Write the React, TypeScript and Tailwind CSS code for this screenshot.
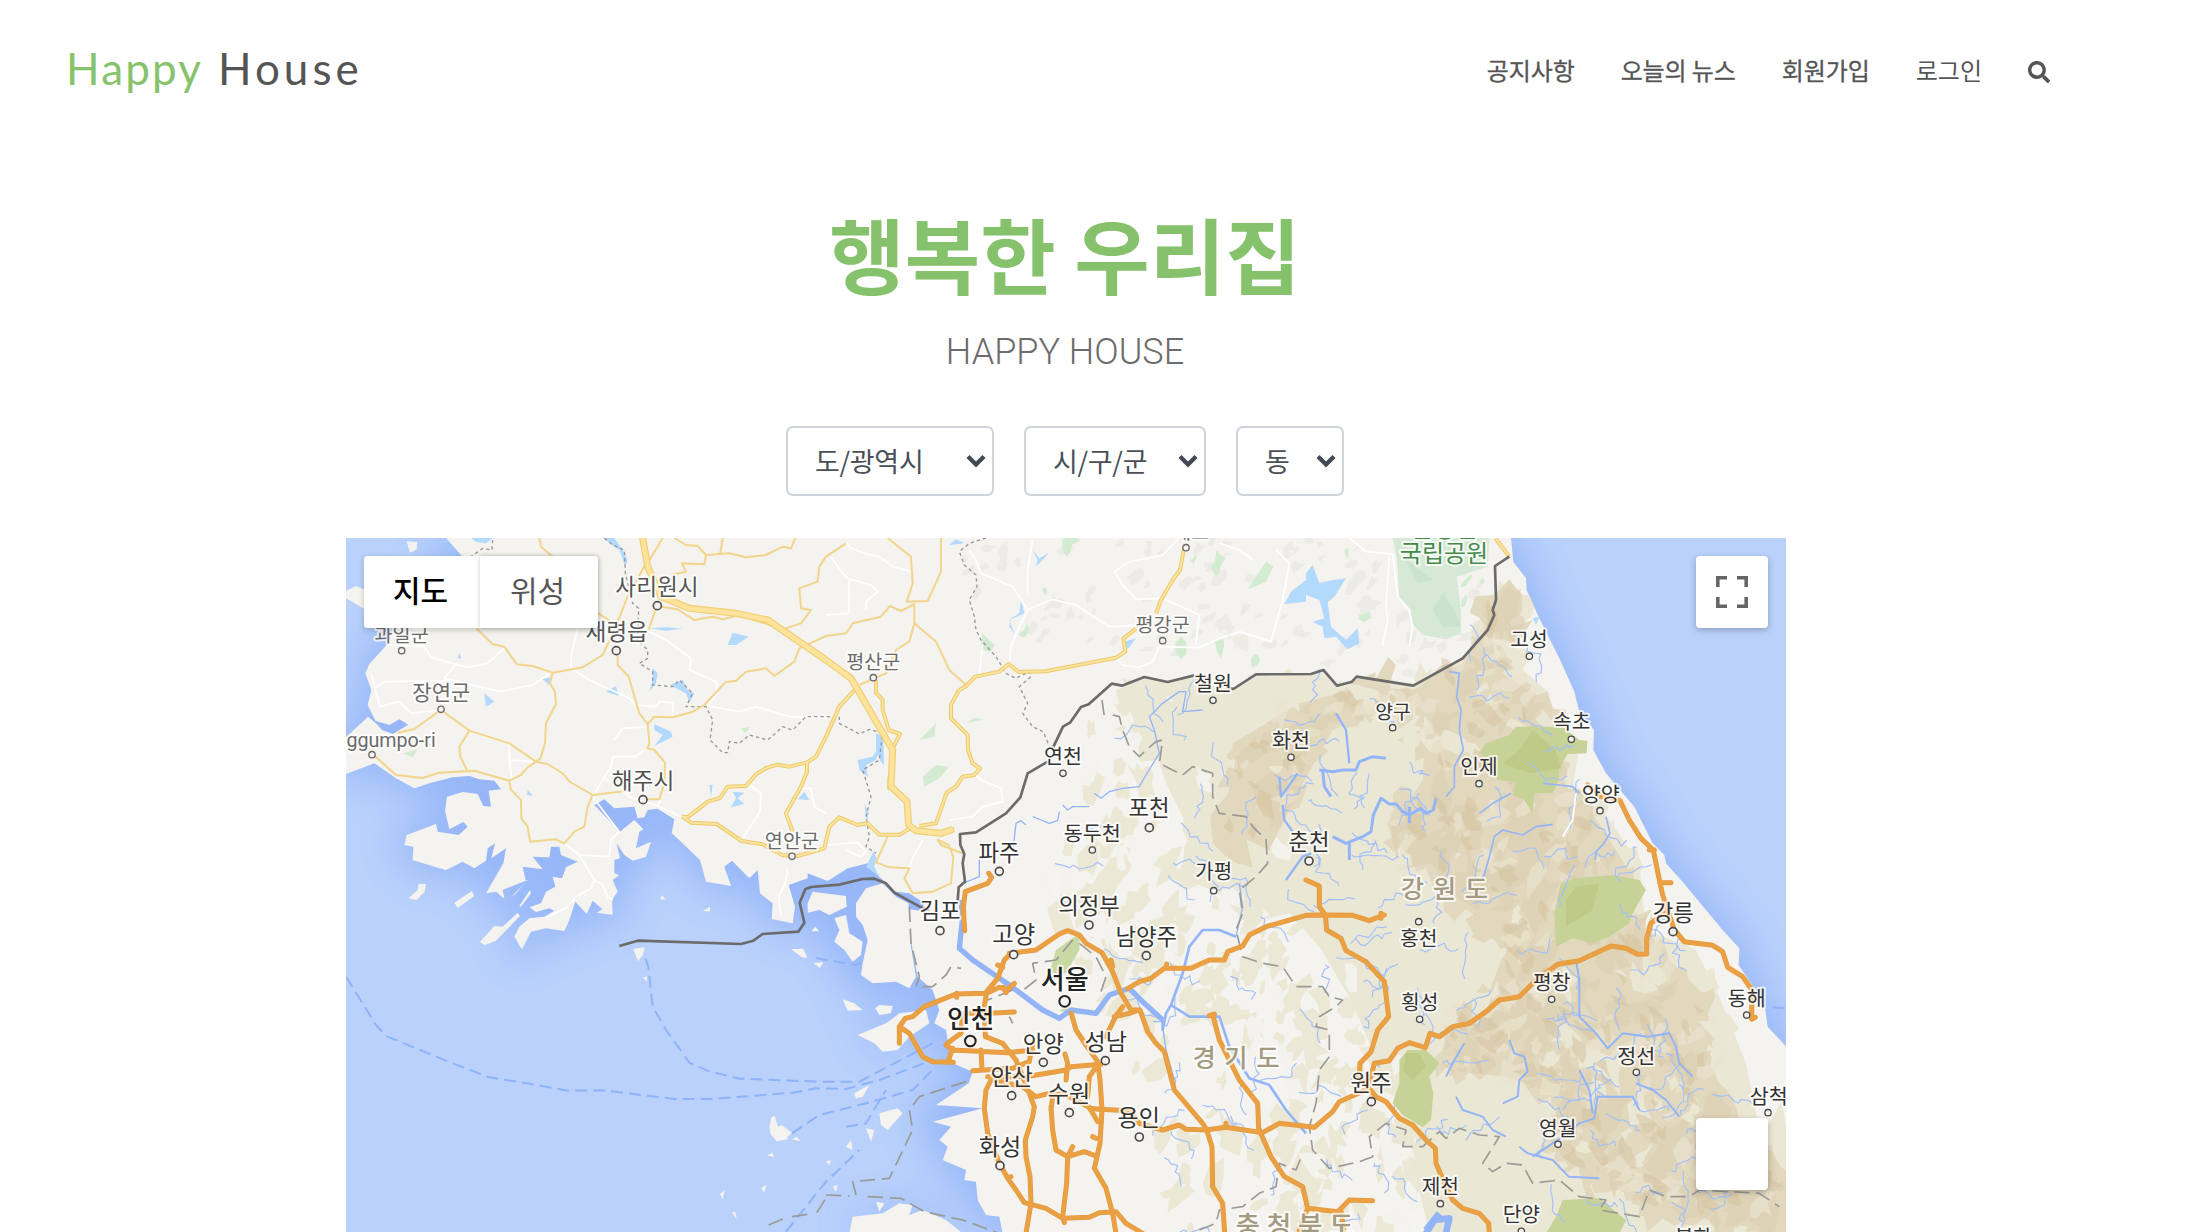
import { FaSearch } from "react-icons/fa";

type Pt = [number, number];

const KR = "font-['Noto_Sans_CJK_KR',sans-serif]";

const MAIN_LAND =
  "M300,24 L350,80 L240,160 L140,294 L122,345 L70,402 L58,430 L76,480 L65,525 L88,572 L130,585 L160,568 L187,584 L140,612 L108,600 L92,582 L66,560 L0,622 L0,732 L85,700 L150,745 L205,775 L250,760 L320,742 L370,738 L400,748 L445,752 L465,778 L428,782 L435,830 L412,828 L395,792 L350,786 L303,800 L297,842 L310,898 L352,876 L365,890 L338,915 L275,905 L270,882 L182,915 L175,945 L202,950 L200,990 L270,1012 L300,1020 L350,995 L385,1015 L420,992 L425,955 L447,940 L436,985 L480,955 L472,1000 L420,1090 L450,1085 L475,1106 L470,1080 L545,1050 L495,1102 L508,1092 L540,1055 L530,1010 L590,1018 L560,980 L610,982 L615,950 L640,950 L645,975 L695,995 L660,1012 L648,1045 L620,1040 L628,1070 L600,1085 L585,1120 L550,1132 L570,1146 L610,1135 L625,1142 L595,1160 L550,1165 L520,1190 L505,1220 L528,1258 L555,1205 L600,1195 L655,1203 L670,1170 L688,1115 L722,1152 L740,1112 L770,1138 L752,1148 L800,1154 L798,1110 L815,1085 L800,1050 L820,1036 L805,1030 L805,990 L822,985 L812,940 L835,975 L860,992 L900,980 L915,935 L870,955 L880,905 L892,898 L865,870 L822,905 L745,825 L775,808 L805,835 L865,830 L875,865 L895,862 L905,840 L935,836 L985,868 L977,910 L1005,935 L1062,990 L1080,1055 L1155,1068 L1135,1010 L1158,992 L1210,1045 L1235,1020 L1242,1090 L1280,1120 L1277,1167 L1340,1180 L1347,1130 L1328,1065 L1385,1045 L1385,1030 L1445,1053 L1505,1015 L1565,1000 L1600,1040 L1650,1085 L1690,1090 L1735,1120 L1722,1142 L1690,1138 L1688,1190 L1700,1260 L1715,1340 L1760,1380 L1780,1440 L1765,1480 L1800,1500 L1810,1560 L1820,1600 L1880,1625 L1868,1660 L1770,1725 L1910,1735 L1760,1775 L1815,1790 L1780,1830 L1805,1850 L1790,1890 L1860,1920 L1855,1950 L1890,1955 L1895,2010 L1920,2055 L1960,2060 L1970,2110 L4330,2110 L4330,1560 L4265,1490 L4258,1440 L4235,1390 L4178,1305 L4180,1255 L4130,1200 L4005,1050 L3960,1000 L3955,975 L3920,940 L3865,830 L3780,730 L3742,660 L3744,600 L3700,545 L3685,485 L3645,395 L3580,265 L3542,180 L3540,145 L3502,95 L3495,24 Z";

const ISLANDS = [
  "M0,182 L30,168 L60,180 L60,240 L0,205 Z M182,34 L214,36 L212,58 L192,68 Z",
  "M187,1105 L215,1080 L218,1062 L240,1062 L236,1085 L212,1110 Z M325,1118 L378,1083 L384,1098 L335,1134 Z M402,1236 L445,1188 L470,1190 L515,1148 L522,1158 L450,1232 L415,1246 Z M520,1128 L552,1080 L555,1090 L525,1130 Z",
  "M862,1256 L896,1252 L890,1276 L876,1294 Z M892,1343 L903,1338 L902,1355 Z M942,1108 L948,1096 L958,1108 Z M1070,1144 L1092,1130 L1092,1144 Z",
  "M1270,1790 L1276,1762 L1286,1758 L1296,1790 L1307,1786 L1338,1808 L1324,1820 L1326,1828 L1292,1834 L1274,1812 Z M1338,1828 L1352,1820 L1364,1834 Z M1264,1876 L1280,1868 L1284,1882 Z M1122,1992 L1136,1980 L1130,2008 Z M1246,1974 L1262,1964 L1254,1988 Z M1158,2046 L1168,2046 L1172,2068 Z",
  "M1335,1258 L1372,1256 L1384,1284 L1368,1282 Z M1402,1300 L1432,1296 L1422,1314 Z M1396,1204 L1408,1190 L1420,1204 Z",
  "M1560,1075 L1610,1060 L1650,1100 L1688,1120 L1690,1190 L1695,1250 L1705,1310 L1710,1340 L1690,1375 L1650,1355 L1580,1360 L1545,1335 L1550,1300 L1565,1230 L1550,1185 L1530,1160 L1530,1120 Z",
  "M1385,1120 L1400,1085 L1500,1098 L1502,1130 L1450,1155 L1420,1140 L1385,1148 Z M1465,1165 L1500,1155 L1510,1210 L1550,1235 L1545,1275 L1520,1295 L1495,1260 L1465,1235 L1480,1200 Z",
  "M1535,1515 L1620,1480 L1660,1450 L1740,1440 L1750,1480 L1690,1520 L1655,1560 L1610,1565 L1585,1540 Z M1588,1435 L1600,1425 L1640,1428 L1635,1450 L1600,1455 Z M1490,1408 L1525,1420 L1550,1440 L1505,1442 Z",
  "M1525,1690 L1570,1665 L1550,1700 L1530,1705 Z M1600,1750 L1655,1735 L1670,1750 L1625,1800 L1605,1785 Z M1560,1795 L1585,1800 L1575,1835 Z M1500,1850 L1515,1830 L1520,1860 Z M1590,2015 L1615,2020 L1600,2045 Z",
  "M1510,2110 L1520,2060 L1610,2050 L1660,2020 L1700,2025 L1690,2055 L1730,2040 L1800,2070 L1850,2110 Z M1440,1895 L1455,1890 L1450,1905 Z M1460,1970 L1475,1965 L1470,1985 Z",
];

const rng = (seed: number) => () => {
  seed = (seed * 1664525 + 1013904223) % 4294967296;
  return seed / 4294967296;
};

const inside = ([x, y]: Pt, poly: Pt[]) => {
  let hit = false;
  for (let i = 0, j = poly.length - 1; i < poly.length; j = i++) {
    const [xi, yi] = poly[i];
    const [xj, yj] = poly[j];
    if (yi > y !== yj > y && x < ((xj - xi) * (y - yi)) / (yj - yi) + xi) hit = !hit;
  }
  return hit;
};

const HIGHLAND: Pt[] = [
  [2310, 480], [2400, 445], [2470, 460], [2560, 435], [2660, 480], [2730, 440], [2930, 430], [2970, 470], [3035, 440], [3200, 470], [3350, 385], [3430, 300],
  [3460, 150], [3520, 210], [3510, 400], [3610, 490], [3610, 600], [3700, 640], [3680, 780], [3790, 870], [3880, 1000], [3900, 1200], [4050, 1260],
  [4120, 1400], [4200, 1600], [4240, 1800], [4330, 1800], [4330, 2110], [3250, 2110], [3200, 1900], [3060, 1800], [3080, 1560], [3010, 1400], [2920, 1250],
  [2830, 1150], [2700, 1180], [2620, 1090], [2500, 1040], [2530, 900], [2460, 760], [2420, 640], [2330, 580],
];
const HIGH: Pt[] = [
  [2860, 520], [3060, 470], [3200, 480], [3350, 400], [3460, 190], [3500, 300], [3470, 430], [3580, 500], [3600, 640], [3680, 800], [3760, 880], [3860, 1040], [3850, 1150],
  [3960, 1280], [4080, 1400], [4110, 1640], [4200, 1830], [4320, 1880], [4320, 2110], [4020, 2060], [3760, 1940], [3580, 1860], [3650, 1700], [3480, 1640],
  [3290, 1620], [3300, 1440], [3480, 1380], [3480, 1200], [3300, 1080], [3260, 1000], [3160, 1020], [3130, 900], [3230, 750], [3240, 560], [3100, 540], [2960, 600], [2860, 780], [2770, 960], [2640, 900], [2660, 640],
];
const FOOTHILL: Pt[] = [
  [2200, 580], [2500, 480], [2800, 900], [3000, 1200], [3150, 1500], [3250, 1850], [3200, 2110], [2480, 2110], [2450, 1800], [2280, 1500], [2150, 1250],
  [2050, 1120], [2120, 900], [2200, 760],
];
const NORTH: Pt[] = [[1800, 30], [3400, 30], [3430, 110], [3420, 280], [3200, 450], [2300, 350], [1950, 320]];

const toPath = (p: Pt[]) => "M" + p.map(([x, y]) => `${x},${y}`).join("L") + "Z";

const shards = (seed: number, n: number, poly: Pt[], size: number, lean: number) => {
  const r = rng(seed);
  const xs = poly.map((p) => p[0]);
  const ys = poly.map((p) => p[1]);
  const [x0, x1, y0, y1] = [Math.min(...xs), Math.max(...xs), Math.min(...ys), Math.max(...ys)];
  let d = "";
  for (let i = 0; i < n; ) {
    const c: Pt = [x0 + r() * (x1 - x0), y0 + r() * (y1 - y0)];
    if (!inside(c, poly)) continue;
    i++;
    const s = size * (0.4 + r());
    const a = lean + (r() - 0.5) * 1.4;
    const pts: Pt[] = [];
    const k = 6 + Math.floor(r() * 6);
    for (let j = 0; j < k; j++) {
      const t = (j / k) * Math.PI * 2;
      const q = 0.3 + r() * 0.85;
      const u = Math.cos(t) * s * q;
      const v = Math.sin(t) * s * q * 0.55;
      pts.push([Math.round(c[0] + u * Math.cos(a) - v * Math.sin(a)), Math.round(c[1] + u * Math.sin(a) + v * Math.cos(a))]);
    }
    d += toPath(pts);
  }
  return d;
};

const creeks = (seed: number, n: number, poly: Pt[]) => {
  const r = rng(seed);
  const xs = poly.map((p) => p[0]);
  const ys = poly.map((p) => p[1]);
  const [x0, x1, y0, y1] = [Math.min(...xs), Math.max(...xs), Math.min(...ys), Math.max(...ys)];
  let d = "";
  for (let i = 0; i < n; ) {
    let x = x0 + r() * (x1 - x0);
    let y = y0 + r() * (y1 - y0);
    if (!inside([x, y], poly)) continue;
    i++;
    let a = r() * 6.28;
    d += `M${Math.round(x)},${Math.round(y)}`;
    for (let j = 0; j < 8; j++) {
      const t = a + (r() - 0.5) * 2.2;
      x += Math.cos(t) * (8 + r() * 18);
      y += Math.sin(t) * (8 + r() * 18);
      a += (r() - 0.5) * 0.5;
      d += `L${Math.round(x)},${Math.round(y)}`;
    }
  }
  return d;
};

const TERRAIN = {
  foot: shards(11, 210, FOOTHILL, 56, 1.9),
  low: shards(5, 150, HIGHLAND, 85, 2),
  high: shards(21, 190, HIGH, 95, 2.1),
  gap: shards(38, 120, HIGHLAND, 62, 0.9),
  mid: shards(77, 190, HIGH, 72, 2.1),
  dark: shards(93, 130, HIGH, 38, 0.9),
  light: shards(54, 110, HIGH, 48, 2.4),
  plain: shards(29, 45, FOOTHILL, 60, 1.2),
  north: shards(61, 110, NORTH, 28, 2.4),
  northGreen: shards(8, 16, NORTH, 30, 2.2),
};
const CREEKS = creeks(3, 110, HIGHLAND) + creeks(17, 40, FOOTHILL);

type Label = [text: string, x: number, y: number, size: number, cx: number, cy: number, color?: string];

const LABELS: Label[] = [
  ["사리원시", 933, 196, 68, 934, 227, "#555"],
  ["새령읍", 812, 329, 68, 811, 362, "#555"],
  ["과일군", 167, 337, 59, 167, 362, "#6b6b6b"],
  ["장연군", 286, 511, 63, 285, 538, "#6b6b6b"],
  ["해주시", 891, 777, 68, 891, 809, "#505050"],
  ["연안군", 1338, 955, 59, 1338, 979, "#6b6b6b"],
  ["평산군", 1582, 418, 59, 1582, 443, "#6b6b6b"],
  ["평강군", 2450, 307, 59, 2450, 332, "#6b6b6b"],
  ["세포", 2535, 27, 59, 2520, 53, "#6b6b6b"],
  ["철원", 2601, 483, 62, 2601, 511],
  ["연천", 2151, 702, 62, 2151, 730],
  ["화천", 2835, 654, 62, 2835, 682],
  ["포천", 2409, 859, 67, 2410, 893],
  ["동두천", 2239, 932, 62, 2239, 960],
  ["파주", 1959, 993, 67, 1960, 1024],
  ["춘천", 2889, 961, 67, 2889, 993],
  ["가평", 2603, 1048, 60, 2603, 1082],
  ["고성", 3549, 352, 61, 3550, 379],
  ["속초", 3677, 598, 61, 3676, 628],
  ["양구", 3141, 568, 58, 3140, 593],
  ["인제", 3399, 733, 61, 3399, 761],
  ["양양", 3764, 815, 62, 3762, 842],
  ["김포", 1782, 1168, 67, 1782, 1202],
  ["의정부", 2229, 1153, 67, 2229, 1185],
  ["고양", 2003, 1239, 70, 2003, 1274],
  ["남양주", 2401, 1246, 67, 2401, 1277],
  ["인천", 1874, 1493, 77, 1873, 1533, "#222"],
  ["서울", 2156, 1376, 78, 2156, 1414, "#222"],
  ["안양", 2092, 1566, 67, 2092, 1597],
  ["성남", 2279, 1559, 69, 2278, 1592],
  ["안산", 1997, 1665, 69, 1997, 1697],
  ["수원", 2169, 1717, 69, 2170, 1748],
  ["용인", 2378, 1789, 69, 2380, 1821],
  ["화성", 1962, 1875, 69, 1962, 1907],
  ["홍천", 3218, 1247, 61, 3218, 1175],
  ["횡성", 3221, 1439, 61, 3221, 1468],
  ["평창", 3617, 1380, 61, 3617, 1408],
  ["강릉", 3982, 1172, 67, 3981, 1205],
  ["동해", 4202, 1429, 62, 4202, 1455],
  ["정선", 3871, 1602, 62, 3871, 1627],
  ["원주", 3075, 1684, 67, 3076, 1715],
  ["영월", 3635, 1817, 61, 3636, 1843],
  ["삼척", 4268, 1721, 62, 4266, 1748],
  ["제천", 3283, 1993, 61, 3283, 2021],
  ["단양", 3526, 2075, 61, 3526, 2104],
  ["봉화", 4042, 2144, 61, 4042, 2180],
];

const ORANGE_ROADS = [
  "M3725,765 L3765,800 L3822,812 L3850,870 L3885,925 L3922,960 L3940,1050 L3950,1095 L3965,1140 L3985,1200 L4015,1235 L4100,1246 L4130,1265 L4145,1312 L4190,1340 L4218,1380 L4217,1468 L4228,1462",
  "M3942,1058 L3975,1058 M3910,960 L3925,960",
  "M3955,1150 L3915,1180 L3902,1225 L3902,1272 L3875,1273 L3840,1255 L3795,1248 L3700,1292 L3635,1303 L3570,1350 L3520,1400 L3460,1410 L3420,1445 L3370,1480 L3320,1490 L3280,1520 L3252,1510 L3238,1553 L3190,1538 L3155,1555 L3130,1592 L3085,1600 L3075,1640 L3060,1680 L2980,1715 L2960,1745 L2905,1792 L2800,1780 L2750,1808 L2640,1792 L2580,1800 L2520,1798 L2500,1785 L2450,1800 L2380,1780 L2350,1742 L2260,1738 L2230,1735",
  "M2880,1050 L2920,1068 L2920,1130 L2938,1155 L2942,1200 L2985,1225 L3000,1262 L3060,1295 L3115,1355 L3128,1460 L3095,1500 L3075,1565 L3042,1600 L3040,1640 L3090,1700 L3120,1715 L3160,1765 L3200,1785 L3240,1830 L3268,1855 L3270,1900 L3285,1935 L3320,2010 L3350,2035 L3400,2050 L3428,2080 L3430,2110",
  "M2345,1376 L2380,1355 L2415,1345 L2455,1315 L2535,1315 L2590,1290 L2635,1290 L2645,1265 L2690,1248 L2710,1215 L2760,1190 L2880,1156 L2920,1155 L3020,1156 L3070,1172 L3115,1155 M3105,1150 L3105,1165 M2462,1302 L2462,1310",
  "M1990,1270 L2070,1260 L2140,1212 L2165,1202 L2200,1215 L2220,1240 L2268,1268 L2300,1325 L2325,1390 L2355,1440 L2382,1440 L2405,1505 L2430,1540 L2455,1565 L2485,1680 L2570,1780 L2582,1800 L2598,1850 L2600,1970 L2630,2020 L2636,2110 M2295,1290 L2300,1310",
  "M1990,1275 L1975,1290 L1955,1345 L1922,1385 L1915,1430 L1918,1520 L1970,1540 L2010,1590 L2050,1690 L2065,1730 L2060,1760 L2038,1830 L2040,1880 L2052,1940 L2055,2020 L2040,2110",
  "M2005,1360 L1985,1378 L1960,1372 L1922,1390 L1830,1392 L1735,1430 L1700,1460 L1678,1465 L1660,1490 L1690,1510 L1730,1580 L1760,1595 L1822,1597 M1660,1490 L1660,1540 M1955,1305 L1970,1312 M1832,1390 L1832,1402 M1980,1388 L1972,1372",
  "M2005,1446 L1930,1450 L1850,1450 L1845,1510 L1810,1535 L1800,1545 L1820,1560 L1985,1568 L2060,1560 M1806,1595 L1820,1555 M1905,1560 L1908,1620 M1880,1622 L2000,1615 L2050,1595 L2060,1540",
  "M1940,1640 L1920,1680 L1915,1735 L1925,1810 L1960,1900 L1985,1945 L2010,1980 L2035,2018 L2100,2035 L2150,2065 L2230,2062 L2260,2048 L2310,2045 L2340,2080 L2390,2110 M1985,1942 L1995,1940",
  "M2176,1450 L2190,1500 L2220,1545 L2255,1595 L2262,1650 L2268,1740 L2262,1840 L2245,1915 L2280,1975 L2300,2050 L2310,2110 M2240,1820 L2250,1825",
  "M2330,1430 L2308,1460 L2280,1520 M2380,1440 L2350,1450 L2305,1460",
  "M1925,1640 L2040,1640 L2160,1620 L2175,1610 L2265,1603 M2157,1572 L2165,1600 L2160,1650 M2255,1605 L2230,1640 L2225,1700",
  "M1940,1650 L2030,1670 L2070,1700 L2110,1690 L2160,1695 L2230,1732 L2255,1775 M2115,1730 L2120,1800 L2130,1860 L2165,1880 L2215,1865 L2250,1878 M2120,1700 L2115,1740 M2165,1880 L2162,1960 L2150,2060 L2155,2078 M2180,1850 L2170,1870",
  "M2600,1453 L2620,1530 L2680,1650 L2735,1720 L2738,1795 L2775,1880 L2815,1940 L2870,1970 L2885,2035 L2975,2045 L3010,2010 L3080,2012 M2985,2045 L2995,2110 M2590,1457 L2605,1452 M2640,1780 L2640,1790 M2860,2100 L2885,2035",
  "M1928,1030 L1937,1042 L1925,1060 L1858,1085 L1852,1130 L1856,1202",
];

const NORTH_HIGHWAYS = [
  "M890,24 L905,110 L945,200 L1030,235 L1170,250 L1265,270 L1440,390 L1515,445 L1640,660 L1635,770 L1683,815 L1688,885 L1710,902 L1785,910 L1815,900",
];
const NORTH_ROADS = [
  "M1008,860 L1035,878 L1112,882 L1187,933 L1250,943 L1310,976 L1355,978 L1435,955 L1450,890 L1480,862 L1535,885 L1565,880 L1600,914 L1662,914 L1700,890",
  "M1008,860 L1025,862 L1085,815 L1122,804 L1145,770 L1200,768 L1230,733 L1260,714 L1295,704 L1330,710 L1383,697 L1410,680 L1440,620 L1480,530 L1530,475",
  "M1383,697 L1383,725 L1365,770 L1320,850 L1340,905",
  "M2515,50 L2502,120 L2480,150 L2445,210 L2430,250 M2370,296 L2332,326 L2338,365 L2310,383 L2100,424 L2018,426 L1988,402 L1960,425 L1888,440 L1860,468 L1838,482 L1815,525 L1815,565 L1865,615 L1866,660 L1880,700 L1902,715 L1885,735 L1850,740 L1830,770 L1802,788 L1770,880 L1720,888",
  "M1590,450 L1590,488 L1610,510 L1610,540 L1628,600 L1662,612 L1640,655 M1630,740 L1630,780",
  "M3448,24 L3490,80",
];
const MINOR_ROADS = [
  "M390,294 L440,343 L475,350 L512,403 L560,408 L620,428 L710,412 L770,375 L805,300 L845,200 L900,100 M750,245 L795,275 M620,428 L612,460 L627,485 L630,522 L600,580 L597,640 L583,685 L570,695 L605,702 L650,730 L672,756 L740,795 L840,783 M815,370 L815,405 L848,440 L880,550 L905,582 L910,640 L905,655 L925,660 L957,698 L955,760 L940,808 L900,808 M905,582 L925,560 L980,562 L1040,545 L1075,525 L1138,457 L1170,452 L1200,425 L1260,415 L1285,438 L1345,395 L1360,355 L1440,318",
  "M285,540 L205,597 L155,608 M285,540 L370,602 L490,640 L570,695 L545,712 L525,735 L490,752 L385,722 L280,728 L230,744 L150,735 L80,672 M370,602 L340,650 L343,680 L365,725 M490,752 L494,778 L525,810 L526,865 L545,890 L552,935 L630,928 L655,940 L685,905 L715,890 L725,830 L740,795 M580,24 L585,50 L620,80",
  "M945,230 L995,238 L1045,270 L1100,260 L1130,268 L1180,255 L1310,298 L1365,280 L1395,240 L1365,235 L1360,175 L1415,155 L1420,110 L1440,80 L1500,40 M985,24 L1020,45 L1055,48 L1080,75 L1150,70 L1200,82 L1260,75 L1310,50 L1335,55 L1348,24 M1130,24 L1122,75 M1080,75 L1075,103 L1008,100 L1020,125 L975,135 M905,100 L950,24 M935,220 L908,300",
  "M1625,24 L1695,80 L1700,160 L1682,215 L1745,213 L1785,125 L1785,24 M1440,318 L1500,310 L1520,280 L1605,260 L1632,228 L1665,243 L1705,222 L1705,280 L1770,335 L1810,420 L1860,465 M1705,280 L1690,335 L1650,360 L1620,430 L1540,465",
  "M1625,920 L1590,997 L1630,1012 L1690,1015 L1675,1045 L1700,1090 L1760,1085 L1815,1060 L1822,980 L1808,945 L1775,930 L1785,945 L1855,972",
];
const WHITE_ROADS =
  "M125,345 L235,350 L255,382 L330,403 L365,412 L425,400 L475,355 M330,403 L295,445 L340,455 M85,475 L115,455 L320,452 L465,485 L560,465 L612,430 M75,430 L102,530 L160,515 L195,550 L285,540 M695,294 L675,380 L675,415 L730,450 L850,505 L870,525 L930,530 L940,515 L980,518 L980,560 M900,300 L960,330 L1035,385 L1030,420 L1110,455 L1115,490 L1085,528 L1180,545 L1230,530 L1330,560 L1440,565 M490,640 L490,690 L560,695 M490,690 L497,745 M895,660 L870,680 L800,680 L795,710 L740,800 L770,840 L820,905 L795,930 L790,980 L700,975 L655,940 M805,630 L830,595 L905,590 M770,740 L850,800 L935,828 L1005,860 M935,828 L945,808 M1210,765 L1245,790 L1242,845 L1187,930 M1365,775 L1395,775 L1405,830 L1440,850 M700,975 L745,1050 L735,1075 L690,1100 L665,1130 L600,1165 M745,1050 L770,1065 L785,1100 L800,1110 M1325,1015 L1318,1060 L1298,1100 L1305,1155 M1500,40 L1515,55 L1555,70 L1600,80 L1640,110 L1695,125 M1455,80 L1490,130 L1505,145 L1575,165 L1595,185 L1560,215 L1560,240 M1510,145 L1508,250 L1440,255 M1870,60 L1890,90 L1905,130 L2000,170 L2045,240 L2020,290 L1995,350 L1990,400 M2060,30 L2045,120 L2045,190 M2045,240 L2120,208 L2190,225 L2290,290 L2380,285 M1900,430 L1910,345 M2310,385 L2330,405 L2380,412 L2420,395 L2440,350 L2560,353 L2620,325 L2680,305 L2775,335 L2810,210 L2830,100 L2790,60 M2500,24 L2450,75 L2350,95 L2305,125 L2330,165 L2370,208 L2450,205 L2560,255 L2550,340 M2620,40 L2680,60 L2720,90 L2700,70 M1890,735 L1905,750 L1965,775 L1970,815 L1910,830 L1880,860 L1810,870 M1440,945 L1535,938 L1560,965 L1545,980 L1500,960 M1730,930 L1700,985 L1690,1015 M3010,24 L3060,65 L3140,72 L3155,200 L3190,240 L3200,290 L3190,350 M3130,80 L3120,230 L3125,270 L3110,345 M3690,790 L3680,870 L3650,920";

const BORDER =
  "M3490,80 L3447,108 L3450,210 L3440,240 L3445,255 L3425,300 L3350,385 L3202,467 L3032,440 L3018,455 L2973,467 L2932,420 L2895,432 L2730,433 L2662,477 L2640,470 M2545,436 L2465,456 L2395,441 L2328,467 L2297,461 L2228,523 L2205,531 L2172,578 L2151,590 L2120,655 M2105,695 L2045,730 L2023,802 L1980,850 L1890,907 L1842,912 L1843,945 L1855,972 L1850,1000 L1857,1055 L1838,1072 L1835,1112";
const SEA_BORDER =
  "M820,1248 L875,1232 L1185,1242 L1222,1232 L1250,1212 L1357,1205 L1375,1178 L1361,1118 L1378,1078 L1395,1071 L1480,1064 L1550,1047 L1585,1046 L1620,1060 L1645,1088 L1725,1132 L1750,1140";

const RIVERS = [
  ["M1845,1110 L1850,1160 L1840,1255 L1880,1290 L1990,1365 L2050,1410 L2090,1440 L2140,1465 L2175,1440 L2250,1450 L2290,1395 L2350,1375 L2395,1420 L2450,1470", 16],
  ["M2450,1470 L2450,1500 L2460,1450 L2475,1425 L2510,1330 L2530,1250 L2570,1200 L2620,1200 L2670,1220 M2475,1425 L2530,1460 L2620,1460 L2650,1550 L2710,1645 L2770,1665 L2820,1740 L2880,1810", 8],
  ["M2450,1490 L2460,1560 L2485,1650 M2670,1220 L2690,1130 L2680,1060 M1850,1060 L1900,1040 L1900,990 L1930,975 M2000,960 L2005,925 L2010,880 L2025,872 L2040,885 M2060,860 L2085,870 L2110,880 L2135,872 L2140,845 M2150,825 L2165,840 L2180,830 L2230,830 M2245,790 L2265,805 L2290,785 L2330,775 L2380,770 L2400,735 L2440,670 L2425,600 L2410,560 L2450,520 L2500,485 L2520,485 L2510,545 L2570,540", 4],
  ["M2960,920 L3000,940 L3050,920 L3075,905 L3082,855 L3105,805 L3130,822 L3150,822 L3170,845 L3190,855 L3225,835 L3240,850 L3262,840 L3270,805 M3010,940 L3010,990 M3190,830 L3190,880 M2920,720 L2960,725 L2990,720 L3030,720 L3040,695 L3080,680 L3120,685 M2930,720 L2935,770 L2955,800", 9],
  ["M2970,550 L3000,600 L3010,700 M2800,740 L2805,800 L2855,730 M2810,825 L2815,870 L2840,905 M2820,1050 L2870,980 L2895,970", 7],
  ["M3310,425 L3340,430 L3332,500 L3345,540 L3340,600 L3352,660 L3325,710 L3325,770 L3300,800 M3410,1050 L3430,980 L3445,920 L3470,900 L3530,915 L3570,890 L3620,883 M3400,850 L3440,820 L3495,790 M3590,760 L3640,765 L3680,770 L3700,790 M3780,860 L3792,910 L3770,945 L3750,965 L3748,990", 5],
  ["M3300,1640 L3320,1600 L3355,1540 M3330,1700 L3350,1740 L3410,1760 L3440,1800 L3480,1820 M3520,1850 L3545,1870 L3620,1890 L3668,1940 L3760,1945 M3470,1720 L3515,1700 L3520,1650 L3545,1625 L3535,1580 L3505,1570 L3490,1530 M3560,1880 L3650,1820 L3700,1780 L3745,1765 L3755,1700 L3790,1700 L3860,1700 L3880,1740 M3690,1290 L3700,1350 L3700,1460 L3750,1510 L3785,1555 L3830,1510 L3905,1520 L3970,1510 L3990,1550 L4000,1600 L4040,1640 M3700,1620 L3730,1680 L3740,1750 M3870,1660 L3920,1680 L3960,1710 L4000,1760", 6],
  ["M3240,2110 L3265,2070 L3310,2065 L3300,2110 M3280,2050 L3240,2100", 20],
] as const;

const LAKES =
  "M770,24 L805,24 L830,60 L845,90 L838,110 L820,60 Z M375,24 L440,24 L420,40 L390,36 Z M1145,345 L1160,308 L1208,320 L1170,345 Z M920,415 L935,430 L930,460 L910,485 L920,450 Z M970,465 L1010,450 L1025,480 L1045,490 L1030,518 L1020,490 Z M780,485 L810,468 L818,498 Z M925,582 L975,605 L980,620 L925,648 L950,615 L925,600 Z M415,490 L445,515 L420,530 Z M1160,785 L1195,788 L1175,805 L1195,822 L1155,832 L1170,805 Z M1355,808 L1375,785 L1390,810 Z M545,780 L562,798 L543,795 Z M335,385 L340,368 L346,385 Z M1090,765 L1100,765 L1095,800 Z M910,295 L965,292 L1010,296 L960,302 Z M590,448 L612,442 L610,465 Z M1810,45 L1830,28 L1855,40 Z M2060,60 L2080,85 L2110,68 L2070,110 L2075,90 Z M2025,210 L2035,250 L1990,270 L2005,310 L1990,290 L1995,265 L2020,250 Z M2335,335 L2370,325 L2345,358 Z M1590,610 L1612,618 L1614,708 L1602,690 L1590,660 Z M1535,690 L1580,680 L1605,640 L1590,690 L1560,705 L1565,740 L1540,720 Z M1555,820 L1568,850 L1558,900 L1562,880 L1560,860 Z M1582,965 L1592,985 L1585,1010 L1600,1040 L1560,1010 Z M2720,350 L2722,345 Z M2815,222 L2835,185 L2880,150 L2880,215 Z M2880,130 L2900,105 L2920,160 L2960,150 L3000,145 L2965,200 L2945,215 L2955,290 L3000,330 L3035,295 L3040,340 L3005,358 L2970,320 L2935,325 L2930,290 L2900,275 L2935,265 L2920,210 L2880,195 Z M3560,265 L3580,260 L3570,285 Z";

const DASHED =
  "M440,30 L438,60 L410,55 L375,80 M775,24 L800,45 L835,60 L838,130 L860,220 L878,235 L875,330 L905,360 L905,385 L880,400 L920,425 L920,465 L980,470 L1000,450 L1040,490 L1020,530 L1080,530 L1100,570 L1092,630 L1130,668 L1145,668 L1150,635 L1180,640 L1210,615 L1265,630 L1310,590 L1340,600 L1380,560 L1480,560 L1480,580 L1540,612 L1570,598 L1610,610 L1600,690 L1550,720 L1575,800 L1560,860 L1570,920 L1560,950 L1590,970 M1920,24 L1870,40 L1840,65 L1855,105 L1890,135 L1893,170 L1870,210 L1885,260 L1890,300 L1905,330 L1950,380 L1980,430 L2010,445 L2050,425 L2055,440 L2020,470 L2045,520 L2030,550 L2060,590 L2092,605 L2115,660";
const PROVINCE =
  "M1690,1130 L1695,1240 L1720,1340 L1710,1370 L1760,1370 L1800,1335 L1815,1310 L1845,1315 M2268,510 L2275,560 M2300,555 L2320,560 L2330,600 L2350,650 L2380,680 L2400,660 L2430,635 L2450,630 L2440,700 L2490,725 L2510,735 L2540,710 L2600,730 L2600,800 L2620,850 L2700,860 L2720,890 L2760,930 L2765,1000 L2730,1040 L2680,1080 L2690,1150 L2670,1200 L2690,1280 L2750,1300 L2810,1310 L2850,1370 L2930,1370 L2950,1400 L2990,1410 L2970,1430 L2920,1460 L2910,1490 L2950,1500 L2950,1580 L2920,1620 L2910,1720 L2890,1790 L2900,1860 L2950,1915 L3040,1895 L3080,1880 L3070,1820 L3120,1780 L3180,1800 L3170,1850 L3230,1850 L3280,1805 L3300,1825 L3340,1795 L3400,1815 L3460,1820 L3410,1900 L3440,1925 L3480,1900 L3530,1905 L3560,1960 L3640,1950 L3700,2000 L3780,2010 L3760,2040 L3880,2060 L3910,1980 L3960,2000 L4030,2000 L4060,1980 L4240,1990 L4300,2030 M2000,1380 L1925,1410 M2000,1480 L1990,1460 M2180,1230 L2130,1290 L2060,1300 L2070,1350 L2020,1390 M2200,1240 L2250,1280 L2280,1340 L2260,1400 M2560,2100 L2610,2080 L2620,2040 L2690,2030 L2740,1990 L2790,1970 L2800,1900 L2850,1920 L2870,1870 M1440,1995 L1510,1998 M1565,2000 L1665,2005 L1735,2045 L1850,2070 L1960,2110 M1860,1655 L1720,1700 L1690,1740 L1700,1800 L1630,1945 L1520,1955 L1530,1995 M1268,2085 L1315,2065 M1338,2060 L1390,2052 M1412,2048 L1440,2005";
const FERRIES =
  "M0,1340 L90,1485 L120,1518 L300,1592 L430,1642 L520,1656 L665,1682 L770,1681 L985,1707 L1100,1707 L1340,1688 L1410,1675 L1500,1677 L1600,1650 L1760,1590 M898,1285 L907,1310 L920,1430 L960,1500 L1030,1598 L1090,1624 L1180,1646 L1420,1655 L1540,1655 L1760,1540 M1338,1810 L1420,1755 L1560,1720 L1700,1680 L1770,1610 M1320,2105 L1380,2030 L1440,1955 L1540,1860 M1410,1284 L1440,1290 L1530,1305 L1555,1295 M4280,1432 L4330,1436 M1500,1790 L1560,1780 L1620,1680";

function MapScene() {
  return (
    <svg viewBox="0 24 4320 2082" className="block h-[694px] w-[1440px]" role="img">
      <defs>
        <filter id="shore" x="-10%" y="-10%" width="120%" height="120%">
          <feGaussianBlur stdDeviation="60" />
        </filter>
        <g id="land">
          <path d={MAIN_LAND} />
          {ISLANDS.map((d) => (
            <path key={d} d={d} />
          ))}
        </g>
        <clipPath id="landClip">
          <path d={MAIN_LAND} />
        </clipPath>
      </defs>
      <rect y="24" width="4320" height="2090" fill="#b9d1fb" />
      <g filter="url(#shore)" opacity="0.9">
        <path d={MAIN_LAND} fill="#93b4f8" stroke="#93b4f8" strokeWidth="50" />
        <path d={ISLANDS[5] + ISLANDS[6]} fill="#93b4f8" stroke="#93b4f8" strokeWidth="80" />
        <path d={ISLANDS[7] + ISLANDS[9]} fill="#93b4f8" />
      </g>
      <path d={FERRIES} fill="none" stroke="#8fb3f8" strokeWidth="6" strokeDasharray="36 18" />
      <use href="#land" fill="#f5f3ef" />
      <g clipPath="url(#landClip)">
        <path d={TERRAIN.north} fill="#ecebe6" />
        <path d={TERRAIN.northGreen} fill="#d3ebd0" />
        <path d={TERRAIN.foot} fill="#ebe8d5" />
        <path d={toPath(HIGHLAND)} fill="#ebe7d5" />
        <path d={TERRAIN.low} fill="#ebe7d5" />
        <path d={TERRAIN.plain} fill="#f4f2ec" />
        <path d={toPath(HIGH)} fill="#e2d8be" />
        <path d={TERRAIN.high} fill="#e2d8be" />
        <path d={TERRAIN.gap} fill="#ebe7d5" />
        <path d={TERRAIN.mid} fill="#ddd0b3" opacity="0.6" />
        <path d={TERRAIN.light} fill="#e9e2cd" opacity="0.7" />
        <path d={TERRAIN.dark} fill="#d3c29d" opacity="0.5" />
        <path d="M3140,24 L3430,24 L3425,110 L3332,140 L3345,240 L3345,310 L3300,328 L3230,315 L3198,280 L3195,240 L3160,200 L3153,90 Z" fill="#d5e9d4" />
        <path d="M3290,190 L3325,240 L3345,290 L3290,290 L3260,240 Z M3180,90 L3260,150 L3215,160 Z" fill="#cce3cb" />
        <path d="M3510,590 L3650,590 L3700,630 L3724,632 L3722,670 L3665,672 L3640,715 L3638,750 L3620,790 L3565,790 L3560,850 L3535,810 L3500,795 L3510,755 L3455,750 L3402,665 L3420,640 L3490,615 Z" fill="#c7d296" />
        <path d="M3560,600 L3630,660 L3645,715 L3550,730 L3470,700 L3520,660 Z" fill="#bfca89" />
        <path d="M3645,1060 L3690,1045 L3800,1035 L3880,1050 L3900,1080 L3860,1150 L3850,1180 L3790,1220 L3740,1240 L3680,1225 L3630,1250 L3625,1150 Z" fill="#c7d296" />
        <path d="M3690,1070 L3760,1060 L3740,1140 L3660,1190 L3660,1110 Z" fill="#bfca89" />
        <path d="M3185,1560 L3240,1560 L3280,1600 L3250,1640 L3262,1690 L3255,1770 L3230,1792 L3170,1755 L3140,1720 L3160,1660 L3160,1590 Z" fill="#c7d296" />
        <path d="M3180,1570 L3220,1570 L3240,1610 L3200,1650 L3170,1620 Z" fill="#bfca89" />
        <path d="M3650,2010 L3760,2005 L3840,2070 L3820,2110 L3600,2110 L3630,2060 Z" fill="#c7d296" />
        <path d="M2130,1260 L2200,1210 L2200,1260 L2160,1330 L2110,1330 Z M2140,1440 L2165,1435 L2160,1450 Z" fill="#c9d9a4" />
        <path d="M1910,310 L1945,345 L1935,365 L1905,360 Z M1730,740 L1770,705 L1810,710 L1780,745 L1735,770 Z M1720,630 L1770,580 L1765,620 Z M1860,580 L1885,563 L1915,568 Z M2710,170 L2760,95 L2782,110 L2760,155 L2705,178 Z M170,670 L215,658 L200,682 Z M1185,595 L1212,592 L1198,610 Z" fill="#d3ebd0" />
      </g>
      <path d={LAKES} fill="#b3d9fd" />
      <g fill="none" strokeLinejoin="round">
        <path d={CREEKS} stroke="#a3c1f8" strokeWidth="3.5" />
        {RIVERS.map(([d, w]) => (
          <path key={d} d={d} stroke="#93b5f8" strokeWidth={w} />
        ))}
        <path d={WHITE_ROADS} stroke="#fff" strokeWidth="5" />
        <path d={DASHED} stroke="#999" strokeWidth="4" strokeDasharray="10 9" />
        <path d={PROVINCE} stroke="#9a9a96" strokeWidth="5" strokeDasharray="46 20" />
        {MINOR_ROADS.map((d) => (
          <path key={d} d={d} stroke="#f1d58c" strokeWidth="6" />
        ))}
        {NORTH_ROADS.map((d) => (
          <path key={d} d={d} stroke="#edc968" strokeWidth="12" />
        ))}
        {NORTH_ROADS.map((d) => (
          <path key={d} d={d} stroke="#fbe3a0" strokeWidth="6" />
        ))}
        {NORTH_HIGHWAYS.map((d) => (
          <g key={d} strokeLinecap="round">
            <path d={d} stroke="#f0ce72" strokeWidth="21" />
            <path d={d} stroke="#fde39c" strokeWidth="14" />
          </g>
        ))}
        <g strokeLinecap="round">
          {ORANGE_ROADS.map((d) => (
            <path key={d} d={d} stroke="#e19a3e" strokeWidth="15" />
          ))}
          {ORANGE_ROADS.map((d) => (
            <path key={d} d={d} stroke="#eba143" strokeWidth="11" />
          ))}
        </g>
        <path d={BORDER} stroke="#6b6b6b" strokeWidth="8" />
        <path d={SEA_BORDER} stroke="#6b6b6b" strokeWidth="8" />
      </g>
      <g
        textAnchor="middle"
        stroke="#ffffff"
        strokeOpacity="0.75"
        strokeWidth="12"
        strokeLinejoin="round"
        style={{ paintOrder: "stroke" }}
        className={KR}
      >
        {LABELS.map(([t, x, y, size, cx, cy, color]) => (
          <g key={t}>
            <g style={{ paintOrder: "normal" }}>
              <circle cx={cx} cy={cy} r={size > 75 ? 16 : size > 65 ? 12 : 9.5} fill="#f4f3f1" stroke={color ?? "#4a4a4a"} strokeOpacity="1" strokeWidth={size > 75 ? 6 : size > 65 ? 5 : 4} />
            </g>
            <text x={x} y={y} fontSize={size} fill={color ?? "#333"} fontWeight={size > 75 ? 500 : 400}>
              {t}
            </text>
          </g>
        ))}
        <circle cx="78" cy="674" r="9.5" fill="#f4f3f1" stroke="#6b6b6b" strokeOpacity="1" strokeWidth="4" style={{ paintOrder: "normal" }} />
        <text x="269" y="650" fontSize="59" textAnchor="end" fill="#6b6b6b" className="font-['Roboto',sans-serif]">
          Monggumpo-ri
        </text>
        <g fontWeight="400">
          <text x="3294" y="96" fontSize="72" fill="#458a4c">국립공원</text>
          <text x="3296" y="20" fontSize="72" fill="#458a4c">금강산</text>
        </g>
        <g fill="#a39a80" fontWeight="500">
          <text x="3308" y="1103" fontSize="76" letterSpacing="26">강원도</text>
          <text x="2683" y="1611" fontSize="76" letterSpacing="26">경기도</text>
          <text x="2856" y="2114" fontSize="80" letterSpacing="20">충청북도</text>
        </g>
      </g>
    </svg>
  );
}

function Picker({ label, width }: { label: string; width: string }) {
  return (
    <button
      className={`flex h-[70px] items-center justify-between rounded-[7px] border-2 border-[#ced4da] bg-white pr-[6px] pl-[27px] text-[27px] text-[#495057] ${width}`}
    >
      <span className="-tracking-[0.3px] whitespace-nowrap">{label}</span>
      <svg viewBox="0 0 20 14" className="h-[14px] w-5">
        <path d="M2 2.5 L10 10.5 L18 2.5" fill="none" stroke="#434a54" strokeWidth="4.4" />
      </svg>
    </button>
  );
}

export default function App() {
  return (
    <div className={`flex h-[1232px] w-[2188px] flex-col overflow-hidden bg-white ${KR}`}>
      <header className="flex h-[139px] shrink-0 items-center justify-between pr-[138px] pl-[66px]">
        <a className="flex gap-[17px] pb-[4px] font-['Lato',sans-serif] text-[44px] leading-none whitespace-nowrap">
          <span className="w-[135px] tracking-[2.2px] text-[#86c36c]">Happy</span>
          <span className="tracking-[4px] text-[#555]">House</span>
        </a>
        <nav className="flex items-center text-[24px] leading-none text-[#555]">
          <a className="mr-[46px] tracking-[-0.1px] [-webkit-text-stroke:0.3px_#555]">공지사항</a>
          <a className="mr-[46px] tracking-[-0.1px] [-webkit-text-stroke:0.3px_#555]">오늘의 뉴스</a>
          <a className="mr-[46px] tracking-[-0.1px] [-webkit-text-stroke:0.3px_#555]">회원가입</a>
          <a className="mr-[46px]">로그인</a>
          <FaSearch className="mt-[5px] size-[22px]" />
        </nav>
      </header>
      <main className="flex w-[2130px] flex-col items-center">
        <h1 className="mt-[55px] text-[82px] leading-[118px] font-bold text-[#86c26b]">행복한 우리집</h1>
        <p className="mt-[14px] font-['Roboto',sans-serif] text-[36px] leading-[52px] font-light text-[#6c6c6c]">HAPPY HOUSE</p>
        <div className="mt-[48px] flex gap-[30px]">
          <Picker label="도/광역시" width="w-[208px]" />
          <Picker label="시/구/군" width="w-[182px]" />
          <Picker label="동" width="w-[108px]" />
        </div>
        <section className="relative left-px mt-[42px] h-[694px] w-[1440px] overflow-hidden">
          <MapScene />
          <div className="absolute top-[18px] left-[18px] flex h-[72px] text-[30px] shadow-[0_2px_6px_rgba(0,0,0,0.2)]">
            <button className="w-[116px] rounded-l-[4px] bg-white pr-[3px] pb-[6px] font-medium text-black">지도</button>
            <button className="w-[118px] rounded-r-[4px] bg-white pr-[3px] pb-[6px] text-[#565656] shadow-[0_0_5px_rgba(0,0,0,0.2)]">위성</button>
          </div>
          <button className="absolute top-[18px] right-[18px] flex size-[72px] items-center justify-center rounded-[4px] bg-white shadow-[0_2px_6px_rgba(0,0,0,0.25)]">
            <svg viewBox="0 0 32 32" className="size-8" fill="none" stroke="#666" strokeWidth="3.6">
              <path d="M1.8 11V1.8H11M21 1.8H30.2V11M30.2 21V30.2H21M11 30.2H1.8V21" />
            </svg>
          </button>
          <div className="absolute right-[18px] bottom-[42px] size-[72px] rounded-[4px] bg-white shadow-[0_2px_6px_rgba(0,0,0,0.25)]" />
        </section>
      </main>
    </div>
  );
}
